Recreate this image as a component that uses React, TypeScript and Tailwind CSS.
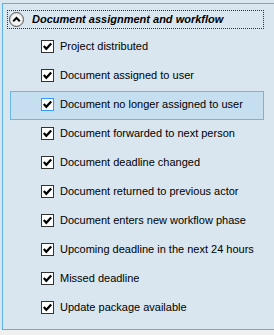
import React from "react";

const items = [
  "Project distributed",
  "Document assigned to user",
  "Document no longer assigned to user",
  "Document forwarded to next person",
  "Document deadline changed",
  "Document returned to previous actor",
  "Document enters new workflow phase",
  "Upcoming deadline in the next 24 hours",
  "Missed deadline",
  "Update package available",
];

function Check({ active }: { active: boolean }) {
  return (
    <div
      className={
        "w-[13px] h-[13px] shrink-0 bg-white border " +
        (active ? "border-[#3399ff]" : "border-[#333333]")
      }
    >
      <svg width="11" height="11" viewBox="0 0 11 11" className="block">
        <path d="M1.8 5 L4.3 7.8 L9.2 2.4" fill="none" stroke="#000" strokeWidth="2.2" />
      </svg>
    </div>
  );
}

export default function App() {
  return (
    <div
      className="w-[274px] h-[335px] bg-[#f0f0f0] overflow-hidden"
      style={{ fontFamily: '"Liberation Sans", Arial, sans-serif' }}
    >
      <div className="h-[330px] bg-[#d9e6ef] pt-[3px] pl-[2px]">
        <div className="h-[327px] border-l border-t border-b border-[#5cb2e9] bg-[#d9e6ef]">
          <div className="ml-[4px] mt-[6px] w-[257px] h-[19px] border border-dotted border-[#333] flex items-center">
            <div className="ml-[1px] w-[15px] h-[15px] rounded-full border border-[#555] bg-[#f4f4f4] flex items-center justify-center shadow-[inset_0_0_0_1px_#dcdcdc]">
              <svg width="9" height="7" viewBox="0 0 9 7" className="block">
                <path d="M1.2 5.2 L4.5 2 L7.8 5.2" fill="none" stroke="#000" strokeWidth="2" />
              </svg>
            </div>
            <span className="ml-[8px] text-[11px] font-bold italic text-black leading-none">
              Document assignment and workflow
            </span>
          </div>
          <div className="ml-[7px] mt-[4px] w-[254px] flex flex-col">
            {items.map((t, i) => {
              const active = i === 2;
              return (
                <div
                  key={t}
                  className={
                    "h-[29px] flex items-start pt-[6px] pl-[30px] border " +
                    (active ? "bg-[#c5dff1] border-[#6ab8ea]" : "border-transparent")
                  }
                >
                  <Check active={active} />
                  <span className="ml-[6px] text-[11px] leading-[12px] text-black">{t}</span>
                </div>
              );
            })}
          </div>
        </div>
      </div>
    </div>
  );
}
